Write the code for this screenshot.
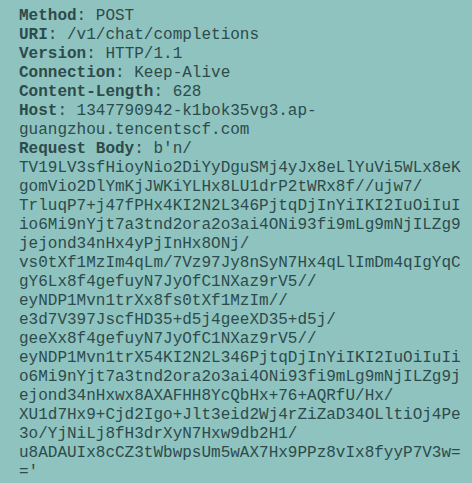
import React from 'react';

// header lines: label in bold, value plain; the Host value wraps onto a second line
const headers: [string, string][] = [
  ['Method', 'POST'],
  ['URI', '/v1/chat/completions'],
  ['Version', 'HTTP/1.1'],
  ['Connection', 'Keep-Alive'],
  ['Content-Length', '628'],
  ['Host', '1347790942-k1bok35vg3.ap-'],
];

const bodyLines = [
  'TV19LV3sfHioyNio2DiYyDguSMj4yJx8eLlYuVi5WLx8eK',
  'gomVio2DlYmKjJWKiYLHx8LU1drP2tWRx8f//ujw7/',
  'TrluqP7+j47fPHx4KI2N2L346PjtqDjInYiIKI2IuOiIuI',
  'io6Mi9nYjt7a3tnd2ora2o3ai4ONi93fi9mLg9mNjILZg9',
  'jejond34nHx4yPjInHx8ONj/',
  'vs0tXf1MzIm4qLm/7Vz97Jy8nSyN7Hx4qLlImDm4qIgYqC',
  'gY6Lx8f4gefuyN7JyOfC1NXaz9rV5//',
  'eyNDP1Mvn1trXx8fs0tXf1MzIm//',
  'e3d7V397JscfHD35+d5j4geeXD35+d5j/',
  'geeXx8f4gefuyN7JyOfC1NXaz9rV5//',
  'eyNDP1Mvn1trX54KI2N2L346PjtqDjInYiIKI2IuOiIuIi',
  'o6Mi9nYjt7a3tnd2ora2o3ai4ONi93fi9mLg9mNjILZg9j',
  'ejond34nHxwx8AXAFHH8YcQbHx+76+AQRfU/Hx/',
  'XU1d7Hx9+Cjd2Igo+Jlt3eid2Wj4rZiZaD34OLltiOj4Pe',
  '3o/YjNiLj8fH3drXyN7Hxw9db2H1/',
  'u8ADAUIx8cCZ3tWbwpsUm5wAX7Hx9PPz8vIx8fyyP7V3w=',
  "='",
];

export default function App() {
  return (
    <div className="w-[472px] h-[483px] overflow-hidden bg-[#8fc3bf] pl-[19px] pt-[7px]">
      <div
        className="text-[16px] leading-[19px] text-[#2d4b4b] whitespace-pre"
        style={{ fontFamily: '"Liberation Mono", monospace' }}
      >
        {headers.map(([k, v]) => (
          <div key={k}>
            <span className="font-bold">{k}</span>: {v}
          </div>
        ))}
        <div>guangzhou.tencentscf.com</div>
        <div>
          <span className="font-bold">Request Body</span>: b'n/
        </div>
        {bodyLines.map((line, i) => (
          <div key={i}>{line}</div>
        ))}
      </div>
    </div>
  );
}
